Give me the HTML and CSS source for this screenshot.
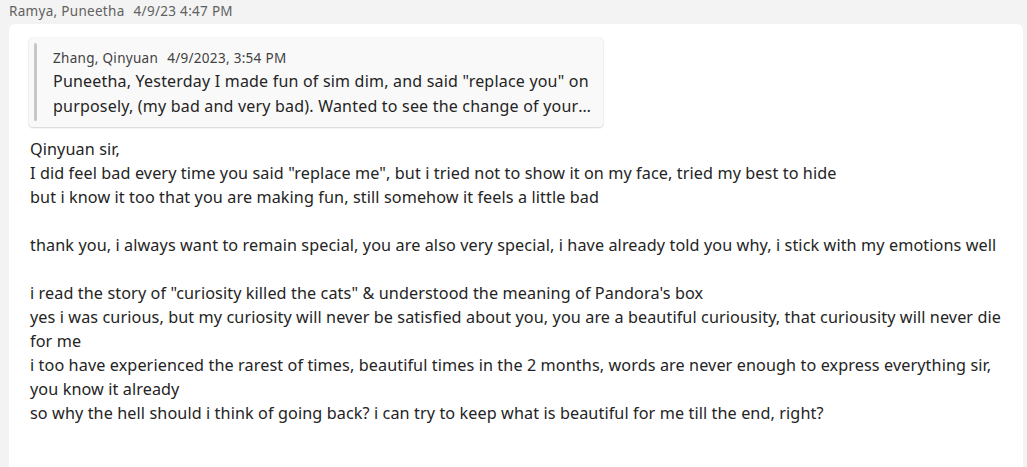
FILE: index.html
```html
<!DOCTYPE html>
<html>
<head>
<meta charset="utf-8">
<link rel="stylesheet" href="styles.css">
</head>
<body>
<div class="thread">
  <div class="meta"><span class="author">Ramya, Puneetha</span><span class="time">4/9/23 4:47 PM</span></div>
  <div class="card">
    <div class="quote">
      <div class="quote-meta"><span>Zhang, Qinyuan</span><span>4/9/2023, 3:54 PM</span></div>
      <div class="quote-text">Puneetha, Yesterday I made fun of sim dim, and said "replace you" on purposely, (my bad and very bad). Wanted to see the change of your expression, and I saw it, I am sorry for that.</div>
    </div>
    <div class="body">
      <p>Qinyuan sir,</p>
      <p>I did feel bad every time you said "replace me", but i tried not to show it on my face, tried my best to hide</p>
      <p>but i know it too that you are making fun, still somehow it feels a little bad</p>
      <p class="blank">&nbsp;</p>
      <p>thank you, i always want to remain special, you are also very special, i have already told you why, i stick with my emotions well</p>
      <p class="blank">&nbsp;</p>
      <p>i read the story of "curiosity killed the cats" &amp; understood the meaning of Pandora's box</p>
      <p>yes i was curious, but my curiosity will never be satisfied about you, you are a beautiful curiousity, that curiousity will never die for me</p>
      <p>i too have experienced the rarest of times, beautiful times in the 2 months, words are never enough to express everything sir, you know it already</p>
      <p>so why the hell should i think of going back? i can try to keep what is beautiful for me till the end, right?</p>
    </div>
  </div>
</div>
</body>
</html>
```
FILE: styles.css
```css
html, body {
  margin: 0;
  padding: 0;
  background: #f3f3f3;
  font-family: "Noto Sans", "Open Sans", sans-serif;
  color: #242424;
}
.thread {
  padding: 1px 4px 0 9px;
}
.meta {
  display: flex;
  gap: 9px;
  font-size: 13.5px;
  letter-spacing: 0.3px;
  line-height: 20px;
  color: #616161;
  height: 23px;
}
.card {
  background: #ffffff;
  border-radius: 6px 6px 0 0;
  padding: 14px 0 40px 20px;
  min-height: 420px;
}
.quote {
  width: 574px;
  box-sizing: border-box;
  background: #f9f9f9;
  border-radius: 4px;
  box-shadow: 0 0 2px rgba(0,0,0,0.12), 0 1px 2px rgba(0,0,0,0.14);
  padding: 10px 12px 8px 24px;
  position: relative;
  margin-bottom: 10px;
}
.quote::before {
  content: "";
  position: absolute;
  left: 5px;
  top: 5px;
  bottom: 6px;
  width: 3px;
  border-radius: 2px;
  background: #c7c7c7;
}
.quote-meta {
  display: flex;
  gap: 9px;
  font-size: 13.5px;
  letter-spacing: 0.3px;
  line-height: 20px;
  color: #424242;
  margin-bottom: 1px;
}
.quote-text {
  font-size: 16px;
  letter-spacing: 0.2px;
  line-height: 25px;
  color: #242424;
  display: -webkit-box;
  -webkit-line-clamp: 2;
  -webkit-box-orient: vertical;
  overflow: hidden;
}
.body {
  padding-left: 1px;
  font-size: 16.2px;
  letter-spacing: 0.1px;
  line-height: 24px;
  width: 990px;
}
.body p {
  margin: 0;
}
```
